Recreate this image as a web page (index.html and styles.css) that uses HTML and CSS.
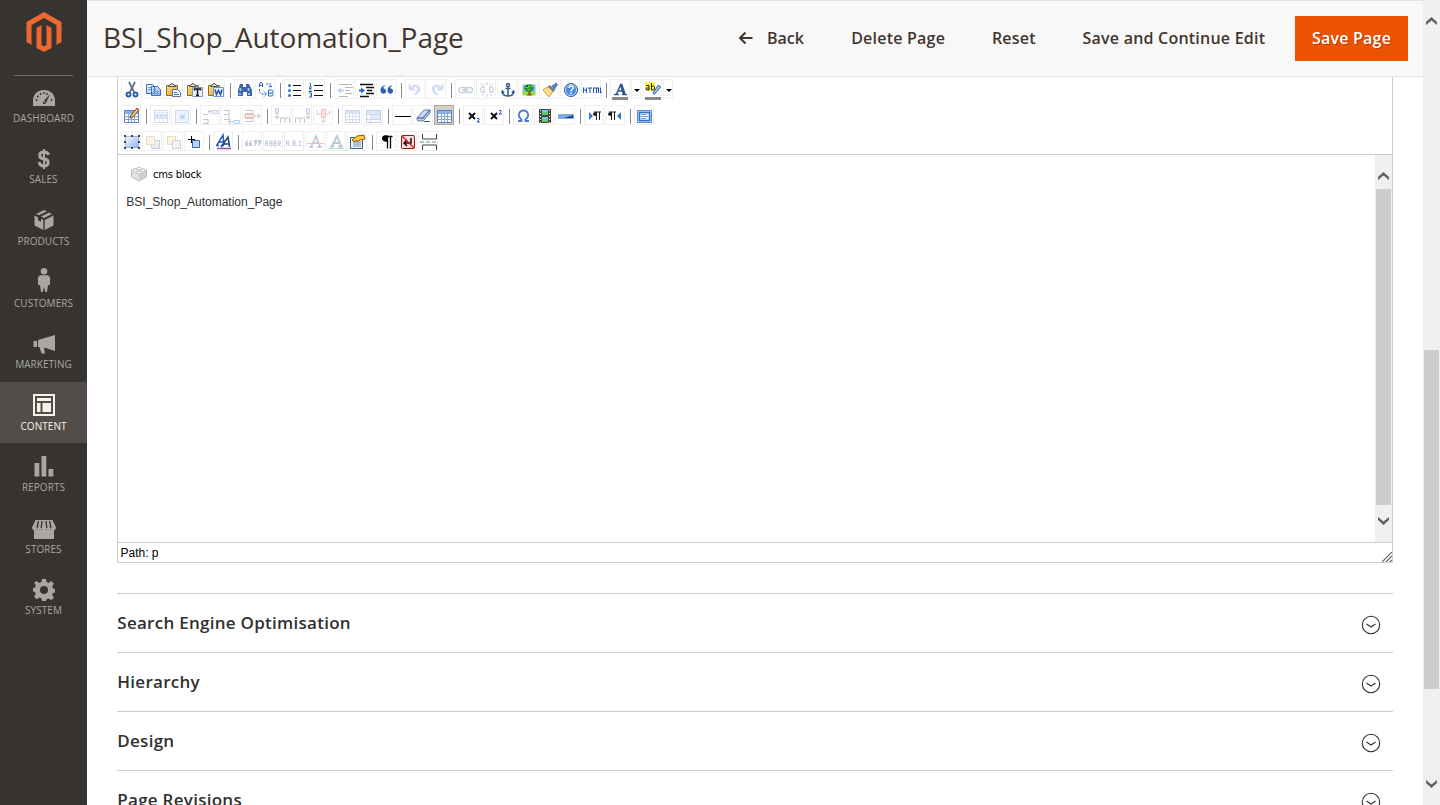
FILE: index.html
```html
<!DOCTYPE html>
<html lang="en">
<head>
<meta charset="utf-8">
<title>BSI_Shop_Automation_Page</title>
<link rel="stylesheet" href="styles.css">
</head>
<body>
<svg class="defs" width="0" height="0">
<defs>
<linearGradient id="blue" x1="0" y1="0" x2="1" y2="1"><stop offset="0" stop-color="#f4f9ff"/><stop offset="1" stop-color="#8fb4ee"/></linearGradient>
<linearGradient id="gold" x1="0" y1="0" x2="1" y2="1"><stop offset="0" stop-color="#ffe48a"/><stop offset="1" stop-color="#d79c20"/></linearGradient>
<g id="board"><path d="M2.500 4.500h11v10h-11z" fill="url(#gold)" stroke="#8a6a24"/><path d="M4.500 5.500h7l-1.500-2h-1c0-1.500-2-1.500-2 0h-1z" fill="#ddd" stroke="#555"/></g>
<g id="grid"><path d="M2.500 4.500h14v12h-14z" fill="#fff" stroke="#5c80bd"/><path d="M3 5h13v3H3z" fill="#8bb1ef"/><path d="M3 10.500h13M3 13.500h13M6.500 7v9M9.500 7v9M12.500 7v9" stroke="#84a4da" fill="none"/></g>
<g id="expand"><circle cx="9" cy="9" r="8.700"/><path d="M4.500 8l4.500 3L13.500 8"/></g>
</defs>
</svg>
<div class="page">
<nav class="menu">
<div class="logo"><svg width="36" height="40" viewBox="0 0 36 40"><path fill="#ee672f" d="M18 0L.5 10v20l5 3V13L18 6l12.500 7v20l5-3V10z"/><path fill="#ee672f" d="M10.500 16l5-3v20l2.500 1.500 2.500-1.500V13l5 3v20L18 40l-7.500-4z"/></svg></div>
<ul class="menu-list">
<li><svg viewBox="0 -1 24 24"><path fill="currentColor" d="M1 20v-5C1 8 5.500 4 12 4s11 4 11 11v5z"/><g fill="#373330"><circle cx="4.500" cy="14" r=".9"/><circle cx="5.800" cy="10.500" r=".9"/><circle cx="8.500" cy="8" r=".9"/><circle cx="12" cy="7" r=".9"/><circle cx="15" cy="8" r=".9"/><circle cx="19.500" cy="14" r=".9"/><path d="M18 8l-4 9c-1 2-4 1-3-1z"/></g><circle cx="12.500" cy="16" r=".8" fill="currentColor"/></svg><span>Dashboard</span></li>
<li><svg viewBox="0 0 24 24"><path fill="none" stroke="currentColor" stroke-width="3" d="M16.500 8c-.5-2-2-3-4.500-3-5.500 0-5.500 5.500-1.500 6.500l3 .7C17.500 13.500 17 19 12 19c-3 0-4.500-1.500-5-4"/><path stroke="currentColor" stroke-width="2" d="M12 2v20"/></svg><span>Sales</span></li>
<li><svg viewBox="0 0 24 24"><path fill="currentColor" d="M12 2l3 1.300-8 4-3-1.400zM17 4.400l3 1.500-8 4-3-1.500zM2.500 7.500l3.500 1.700v3l3 1.500v-3l2.300 1.200V22L2.500 17.500zM21.500 7.500v10L12.700 22V11.900z"/></svg><span>Products</span></li>
<li><svg class="person" viewBox="0 0 24 24"><circle cx="12" cy="3.300" r="3.300" fill="currentColor"/><path fill="currentColor" d="M8 7.200h8l2 2V17h-2l-1 7h-1.800L12 19l-1.200 5H9l-1-7H6V9.200z"/></svg><span>Customers</span></li>
<li><svg viewBox="0 0 24 24"><path fill="currentColor" d="M1.500 10H5v6H1.500zM6 9l17-5v16L12 16.500 13 22.500h-3.500L7.500 16H6z"/></svg><span>Marketing</span></li>
<li class="active"><svg viewBox="0 0 24 24"><path d="M2 2h20v20H2z" fill="none" stroke="currentColor" stroke-width="2"/><path fill="currentColor" d="M5 5h14v3H5zM5 10h3.500v9H5zM10.500 10H19v9h-8.500z"/></svg><span>Content</span></li>
<li><svg viewBox="0 0 24 24"><path fill="currentColor" d="M2.500 9h4.800v13.500H2.500zM9.500 2h4.800v20.500H9.500zM16.500 15h4.800v7.500h-4.800z"/></svg><span>Reports</span></li>
<li><svg viewBox="0 0 24 24"><path fill="currentColor" d="M3.500 4h17L24 11.500c0 3-4 4-5 1.500-1 2-4 2-4.500 0-1 2-4 2-5 0-1 2-4 2-4.500 0-1 2.500-5 1.500-5-1.500z"/><path stroke="#373330" stroke-width="1.300" d="M6.500 5L5 12M10 5l-.8 7M14 5l.8 7M17.500 5l1.500 7"/><path fill="currentColor" d="M2 14h20v9H2z"/></svg><span>Stores</span></li>
<li><svg viewBox="0 0 24 24"><path fill="currentColor" fill-rule="evenodd" d="M10 1h4l.6 3 2 .9L19.300 3 22 5.800l-1.800 2.500.8 2.100 2 .5v3.500l-2 .6-.8 2 1.800 2.500-2.700 2.700-2.600-1.800-2.100.9L14 23h-4l-.6-2.700-2.100-.9-2.600 1.800L2 18.500 3.800 16 3 14l-2-.6V9.900l2-.5.8-2.100L2 4.800 4.700 3l2.600 1.900 2.100-.9zM12 8a4 4 0 100 8 4 4 0 000-8z"/></svg><span>System</span></li>
</ul>
</nav>
<main class="main">
<header class="header">
<h1>BSI_Shop_Automation_Page</h1>
<div class="actions">
<span class="act back"><svg width="15" height="14" viewBox="0 0 15 14"><path d="M7.500 1.500L2 7l5.500 5.500M2 7h12.500" fill="none" stroke="#41362f" stroke-width="2"/></svg>Back</span>
<span class="act delete">Delete Page</span>
<span class="act reset">Reset</span>
<span class="act continue">Save and Continue Edit</span>
<span class="save">Save Page</span>
</div>
</header>
<div class="content">
<section class="editor">
<div class="toolbar">
<div class="row">
<i class="btn"><svg viewBox="0 0 20 20"><path d="M7 2l5 10M13 2L8 12" stroke="#5d6d86" stroke-width="1.700"/><g fill="none" stroke="#285cb5" stroke-width="1.900"><circle cx="6.500" cy="14.500" r="2"/><circle cx="13.500" cy="14.500" r="2"/></g></svg></i>
<i class="btn"><svg viewBox="0 0 20 20"><g fill="url(#blue)" stroke="#3c6ec4"><path d="M3.500 4.500h6l2 2v7h-8zM8.500 6.500h6l3 3v6h-9z"/></g><path d="M5 7.500h3M5 9.500h3M10 9.500h3M10 11.500h6M10 13.500h6" stroke="#6f96da"/></svg></i>
<i class="btn"><svg viewBox="0 0 20 20"><g transform="translate(0 1)"><use href="#board"/><path d="M8.500 8.500h5l3 3v4h-8z" fill="#edf3fc" stroke="#5273a4"/><path d="M10 11.500h3M10 13.500h5" stroke="#5273a4"/></g></svg></i>
<i class="btn"><svg viewBox="0 0 20 20"><g transform="translate(0 1)"><use href="#board"/><path d="M7.500 6.500h10v9h-10z" fill="#e8f0ff" stroke="#8297b7"/><path d="M9.500 9.500V8h6v1.500M12.500 8v6.500M11 14.500h3" fill="none" stroke="#111" stroke-width="1.500"/></g></svg></i>
<i class="btn"><svg viewBox="0 0 20 20"><g transform="translate(0 1)"><use href="#board"/><path d="M7.500 6.500h10v9h-10z" fill="#e8f0ff" stroke="#6f94ce"/><path d="M9 8.500l1.500 5 2-4 2 4 1.500-5" fill="none" stroke="#2155ae" stroke-width="1.500"/></g></svg></i>
<b class="sep"></b>
<i class="btn"><svg viewBox="0 0 20 20"><path d="M5 4h3v3h3V4h3l3 6v6h-5v-4H8v4H3v-6z" fill="#3b67aa"/><path d="M5.500 8v3M13.500 8v3M5 13v2M14 13v2" stroke="#a8c8f4" stroke-width="1.800"/></svg></i>
<i class="btn"><svg viewBox="0 0 20 20"><g fill="none" stroke="#2765c7"><path d="M3.500 7V4L5 2l1.500 2v3M3.500 5.500h3M12.500 10v6h3c2 0 2-3 0-3 2 0 2-3 0-3zM12.500 13h3"/><path d="M3.500 9v3l2 2h5M8 11.500l2.500 2.500L8 16.500" stroke-dasharray="2 1"/><path d="M10 4h4.500v3M12.500 5.500l2 2 2-2" stroke-dasharray="2 1"/></g></svg></i>
<b class="sep"></b>
<i class="btn"><svg viewBox="0 0 20 20"><path d="M8 5.500h8M8 10.500h8M8 15.500h8" stroke="#111"/><g fill="#3974cc"><circle cx="4.500" cy="5.500" r="1.500"/><circle cx="4.500" cy="10.500" r="1.500"/><circle cx="4.500" cy="15.500" r="1.500"/></g></svg></i>
<i class="btn"><svg viewBox="0 0 20 20"><path d="M8 5.500h9M8 10.500h9M8 15.500h9" stroke="#111"/><path d="M3.500 3.500h1v3M3 7h3M3 8.500h2v1l-2 2h3M3 13h2.500v4H3M4 15h1" fill="none" stroke="#245bc5"/></svg></i>
<b class="sep"></b>
<i class="btn dim"><svg viewBox="0 0 20 20"><path d="M4 4.500h13M10 7.500h8M10 10.500h5M10 13.500h7M4 16.500h9" stroke="#222"/><path d="M2 10.500l4-3v2h3v2H6v2z" fill="#3a76d2"/></svg></i>
<i class="btn"><svg viewBox="0 0 20 20"><path d="M4 4.500h13M10 7.500h8M11 10.500h5M10 13.500h8M4 16.500h9" stroke="#111" stroke-width="1.400"/><path d="M9 10.500l-4-3v2H3v2h2v2z" fill="#2765c7"/></svg></i>
<i class="btn"><svg viewBox="0 0 20 20"><g fill="#2b5eb0" transform="translate(.5 .5)"><path d="M8.500 5C6 6 5.500 7 6 8c2 0 2.500 1 2.500 3 0 3-5.500 3-5.500-1 0-3 2-5 5.500-5zM15.500 5C13 6 12.500 7 13 8c2 0 2.500 1 2.500 3 0 3-5.500 3-5.500-1 0-3 2-5 5.500-5z"/></g></svg></i>
<b class="sep"></b>
<i class="btn dim"><svg viewBox="0 0 20 20"><path d="M3 4v6h6L7 8c3-3 6 0 4 3l-3 4c8-2 8-11 0-10L5 7z" fill="#779de2" stroke="#547fc4" stroke-width=".6"/></svg></i>
<i class="btn dim"><svg viewBox="0 0 20 20"><path d="M16 4v6h-6l2-2c-3-3-6 0-4 3l3 4c-8-2-8-11 0-10l3 2z" fill="#779de2" stroke="#547fc4" stroke-width=".6"/></svg></i>
<b class="sep"></b>
<i class="btn dim"><svg viewBox="0 0 20 20"><g fill="none" stroke="#56739c" stroke-width="1.400"><rect x="3" y="7.500" width="7" height="5" rx="2.500"/><rect x="9.500" y="7.500" width="7" height="5" rx="2.500"/><path d="M6 10h7"/></g></svg></i>
<i class="btn dim"><svg viewBox="0 0 20 20"><g fill="none" stroke="#56739c" stroke-width="1.300"><path d="M8 7H5c-2 1-2 4 0 5h3M12 7h3c2 1 2 4 0 5h-3M6 9.500h2M12 9.500h2"/><path d="M10 2v3M6 3l1.500 2M14 3l-1.500 2M3 4l2 1M17 4l-2 1M10 14v3M7 14l-2 2M13 14l2 2" stroke="#555" stroke-width=".8"/></g></svg></i>
<i class="btn"><svg viewBox="0 0 20 20"><g fill="none" stroke="#3b6190" stroke-width="1.600"><circle cx="10" cy="5" r="1.500"/><path d="M10 6.500v10M7.500 8.500h5M4.500 11.500c0 3 2 4.500 5.500 4.500s5.500-1.500 5.500-4.500M3.500 13l1-2 1.500 2M16.500 13l-1-2-1.500 2"/></g></svg></i>
<i class="btn"><svg viewBox="0 0 20 20"><g transform="translate(.5 .5)"><path fill="#80bfff" d="M3 4h13v8H3z"/><path fill="#9cd944" d="M3 11h13v4H3z"/><path d="M9 8h2v5l2 2H7l2-2z" fill="#885521"/><path d="M5 6l2-2h5l2 2v3l-2 2H7L5 9z" fill="#268d2d"/><path d="M6 7h3V5M10 6h3M8 9h3" stroke="#7bd756"/></g></svg></i>
<i class="btn"><svg viewBox="0 0 20 20"><path d="M12 6l4-3 1.500 1.500-3 5z" fill="#5684ce" stroke="#244d86" stroke-width=".6"/><path d="M9 6l5 4-5 7-6-7z" fill="#f8dc80" stroke="#c89640"/><path d="M10 5l5 5-1.500 2L8 7z" fill="#6b7d99"/><path d="M4.500 10l4.500 5" stroke="#fff5b3"/></svg></i>
<i class="btn"><svg viewBox="0 0 20 20"><g transform="translate(.5 .5)"><circle cx="9.500" cy="9.500" r="6.500" fill="#488ade" stroke="#245ba9"/><circle cx="9.500" cy="9.500" r="5.500" fill="none" stroke="#b8d8ff"/><path d="M7.500 7.500c0-3 4.500-2.500 4 0 0 1.500-2 1.500-2 3.500M9.500 12v1.500" stroke="#fff" fill="none" stroke-width="1.500"/></g></svg></i>
<i class="btn"><svg viewBox="0 0 20 20"><path d="M1.500 7.500V13M4.500 7.500V13M1.500 10h3M6 8h4M8 8v5M11.500 13V8h3v5M14.500 8h2v5M18.500 7.500v5H20" stroke="#2456a8" stroke-width="1.100" fill="none"/></svg></i>
<b class="sep"></b>
<i class="btn"><svg viewBox="0 0 20 20"><path d="M3 14.500h5M11 14.500h5M5.500 14l4-9 3 9M7 11h5" fill="none" stroke="#30578e" stroke-width="1.400"/><path d="M10 4l3.500 10" stroke="#30578e" stroke-width="2.500"/><path d="M1 17h16v3H1z" fill="#888"/></svg></i><i class="arrow"></i>
<i class="btn"><svg viewBox="0 0 20 20"><path d="M2 2h10v9H2z" fill="#f9f84a"/><path d="M3 5.500h3V10H4c-1.500-1-1.500-2 0-2h2M8.500 3v7h2c1.500 0 1.500-4 0-4h-2" fill="none" stroke="#222"/><path d="M10 13l1.500 1L17.500 7l-2-2z" fill="#a8cbed" stroke="#29589d"/><path d="M2 17h16v3H2z" fill="#888"/></svg></i><i class="arrow"></i>
</div>
<div class="row">
<i class="btn"><svg viewBox="0 0 20 20"><use href="#grid"/><path d="M8 12l1-3 6-7 2 2-6 7z" fill="#f8c46c" stroke="#6b4525"/><path d="M14.500 3l1-1 2 2-1 1z" fill="#e05b48"/></svg></i>
<b class="sep"></b>
<i class="btn dim"><svg viewBox="0 0 20 20"><path d="M3.500 4.500h13v12h-13z" fill="#fff" stroke="#678dcc"/><path d="M3 8h14v5H3z" fill="#739eea"/><path d="M8.500 5v11M12.500 5v11M4 6.500h12" stroke="#a8c4ee"/></svg></i>
<i class="btn dim"><svg viewBox="0 0 20 20"><path d="M3.500 4.500h13v12h-13z" fill="#d7e6ff" stroke="#678dcc"/><path d="M8 9h5v4H8z" fill="#3470d2"/><path d="M4 8h12M4 13h12M8 5v11M13 5v11" stroke="#a8c4ee"/></svg></i>
<b class="sep"></b>
<i class="btn dim"><svg viewBox="0 0 20 20"><path d="M2 8.500h5M2 13.500h5M2 17.500h5M7 13v5M11 5.500H8M10 3L7 5.500 10 8" fill="none" stroke="#555"/><path d="M11.500 4.500h6v3h-6z" fill="#cfe1ff" stroke="#376ccd"/></svg></i>
<i class="btn dim"><svg viewBox="0 0 20 20"><path d="M2 4.500h5M2 8.500h5M2 13.500h5M7 4v10M11 15.500H7M9 13l-3 2.500L9 18" fill="none" stroke="#555"/><path d="M11.500 14.500h6v3h-6z" fill="#cfe1ff" stroke="#376ccd"/></svg></i>
<i class="btn dim"><svg viewBox="0 0 20 20"><path d="M2 4.500h8v3H2M2 15.500h8v-3H2M11 10h6M14.500 7.500l3 2.500-3 2.500" fill="none" stroke="#555"/><path d="M1.500 8.500h10v3h-10z" fill="#f7a2a2" stroke="#d04e4e"/></svg></i>
<b class="sep"></b>
<i class="btn dim"><svg viewBox="0 0 20 20"><path d="M3.500 2.500h3v5h-3z" fill="#b8d0ff" stroke="#437acb"/><path d="M5 8v4M3 10l2 3 2-3M8.500 17v-5h9v5M13 12v5" fill="none" stroke="#555"/></svg></i>
<i class="btn dim"><svg viewBox="0 0 20 20"><path d="M13.500 2.500h3v5h-3z" fill="#b8d0ff" stroke="#437acb"/><path d="M15 8v4M13 10l2 3 2-3M2.500 17v-5h9v5M7 12v5" fill="none" stroke="#555"/></svg></i>
<i class="btn dim"><svg viewBox="0 0 20 20"><path d="M3 4v4h4M16 4v4h-4M9.500 12v5M7 14l2.500 3 2.500-3" fill="none" stroke="#777"/><path d="M7.500 3.500h4v8h-4z" fill="#f7a2a2" stroke="#d04e4e"/></svg></i>
<b class="sep"></b>
<i class="btn dim"><svg viewBox="0 0 20 20"><use href="#grid"/></svg></i>
<i class="btn dim"><svg viewBox="0 0 20 20"><path d="M2.500 4.500h14v12h-14z" fill="#fff" stroke="#3d63a5"/><path d="M3 5h13v3H3zM7 8h9v6H7z" fill="#9dc0f6"/><path d="M6.500 5v11M12.500 5v3M3 8.500h13M3 13.500h13" stroke="#678dcc"/></svg></i>
<b class="sep"></b>
<i class="btn"><svg viewBox="0 0 20 20"><path d="M2 10.500h16" stroke="#000"/></svg></i>
<i class="btn"><svg viewBox="0 0 20 20"><path d="M3 12l7-8h6v3l-7 8H5c-2 0-2-1-2-3z" fill="url(#blue)" stroke="#62789d"/><path d="M3 12h6l7-8M10 15.500h6" fill="none" stroke="#314f7e"/></svg></i>
<i class="btn selected"><svg viewBox="0 0 20 20"><use href="#grid"/></svg></i>
<b class="sep"></b>
<i class="btn"><svg viewBox="0 0 20 20"><path d="M5 7l6 6M11 7l-6 6" stroke="#111" stroke-width="2"/><path d="M13 12.500h2V14l-2 2h3" fill="none" stroke="#245bc5"/></svg></i>
<i class="btn"><svg viewBox="0 0 20 20"><path d="M6 7l6 6M12 7l-6 6" stroke="#111" stroke-width="2"/><path d="M14 4.500h2V6l-2 2h3" fill="none" stroke="#245bc5"/></svg></i>
<b class="sep"></b>
<i class="btn"><svg viewBox="0 0 20 20"><path d="M4 15h3.500v-1.500c-5-4-2-9 2-9s7 5 2 9V15H15" fill="none" stroke="#4b79ce" stroke-width="1.800"/></svg></i>
<i class="btn"><svg viewBox="0 0 20 20"><path d="M4 3h12v14H4z" fill="#444"/><path d="M7 4h6v5H7zM7 11h6v5H7z" fill="#62c66c"/><path d="M7 4h6v2H7zM7 11h6v2H7z" fill="#70c9ee"/><path d="M5.500 4v13M14.500 4v13" stroke="#fff" stroke-dasharray="1 2"/></svg></i>
<i class="btn"><svg viewBox="0 0 20 20"><path d="M2.500 8.500h15v4h-15z" fill="#7babed" stroke="#8da5cf"/><path d="M8 12h9V9z" fill="#164c9d"/></svg></i>
<b class="sep"></b>
<i class="btn"><svg viewBox="0 0 20 20"><path d="M4 6l4 4-4 4z" fill="#3974cc"/><path d="M11.500 6v8M14.500 6v8M9 6h7" stroke="#222"/><path d="M11 6c-4 0-4 4 0 4z" fill="#222"/></svg></i>
<i class="btn"><svg viewBox="0 0 20 20"><path d="M15 6l-4 4 4 4z" fill="#3974cc"/><path d="M5.500 6v8M8.500 6v8M3 6h7" stroke="#222"/><path d="M5 6c-4 0-4 4 0 4z" fill="#222"/></svg></i>
<b class="sep"></b>
<i class="btn"><svg viewBox="0 0 20 20"><path d="M2.500 4.500h14v12h-14z" fill="#b9d2fa" stroke="#6288c2"/><path d="M4.500 6.500h10v8h-10z" fill="#eef6ff" stroke="#3470c6" stroke-width="1.500"/><path d="M6 8.500h6M6 10.500h7M6 12.500h5" stroke="#7ba3df"/></svg></i>
</div>
<div class="row">
<i class="btn"><svg viewBox="0 0 20 20"><path d="M3.500 4.500h13v11h-13z" fill="url(#blue)" stroke="#777" stroke-dasharray="1 1"/><path d="M2 3h2v2H2zM9 3h2v2H9zM16 3h2v2h-2zM2 15h2v2H2zM9 15h2v2H9zM16 15h2v2h-2zM2 9h2v2H2zM16 9h2v2h-2z" fill="#294978"/></svg></i>
<i class="btn dim"><svg viewBox="0 0 20 20"><path d="M8.500 8.500h8v8h-8z" fill="#b9c9df" stroke="#65779a"/><path d="M3.500 4.500h8v8h-8z" fill="#ffe3a0" stroke="#b89954"/></svg></i>
<i class="btn dim"><svg viewBox="0 0 20 20"><path d="M3.500 4.500h8v8h-8z" fill="#ffe3a0" stroke="#b89954"/><path d="M8.500 8.500h8v8h-8z" fill="#d9e0eb" stroke="#65779a"/></svg></i>
<i class="btn"><svg viewBox="0 0 20 20"><path d="M3 7.500h7M6.500 4v7" stroke="#000"/><path d="M7.500 8.500h7v7h-7z" fill="#b9d5fb" stroke="#3367b4"/></svg></i>
<b class="sep"></b>
<i class="btn"><svg viewBox="0 0 20 20"><path d="M2 13.500h3M7 13.500h3M3 13l6-10 1 10M5 10h5" fill="none" stroke="#285aad" stroke-width="1.500"/><path d="M7 15l7-10 1.500 10M10 12h6" fill="none" stroke="#244786" stroke-width="1.600"/><path d="M3 16.500h14" stroke="#8653af" stroke-width="1.500"/></svg></i>
<b class="sep"></b>
<i class="btn dim"><svg viewBox="0 0 20 20"><g fill="#3c5e96"><path d="M4 8l-2 3v3h3v-3H4l1-3zM8 8l-2 3v3h3v-3H8l1-3zM11 8h3v3l-2 3h-1l1-3h-1zM15 8h3v3l-2 3h-1l1-3h-1z"/></g></svg></i>
<i class="btn dim"><svg viewBox="0 0 20 20"><path d="M1.500 14V9h2v5M2 11.500h2M6 9v5h2V9zM6 11.500h2M10 9v5h2V9zM10 11.500h2M14.500 14V9h2v2.500h-2l2.500 3" fill="none" stroke="#445e9a"/></svg></i>
<i class="btn dim"><svg viewBox="0 0 20 20"><path d="M1.500 14V9h2v5M2 11.500h2M5.500 13v1M8 9v5h2V9zM8 11.500h2M11.500 13v1M16.500 9.500h-2V14h2M18 13v1" fill="none" stroke="#445e9a"/></svg></i>
<i class="btn dim"><svg viewBox="0 0 20 20"><path d="M3 15h4M11 15h5M5 15l5-11 4 11M7 11h5" fill="none" stroke="#30578e" stroke-width="1.600"/><path d="M1 11.500h17" stroke="#e23535"/></svg></i>
<i class="btn dim"><svg viewBox="0 0 20 20"><path d="M3 14.500h4M11 14.500h5M5 14l5-10 4 10M7 11h5" fill="none" stroke="#30578e" stroke-width="1.800"/><path d="M1 16.500h16" stroke="#20ae35"/></svg></i>
<i class="btn"><svg viewBox="0 0 20 20"><path d="M2.500 5.500h12v11h-12z" fill="#eef4fc" stroke="#435574"/><path d="M5 10h8M5 12h8M5 14h8" stroke="#6e8db5"/><path d="M4 8l5-4 7-1 1 4-5 1-3 2-1-2-2 2z" fill="#ffcc3d" stroke="#8c5b17"/></svg></i>
<b class="sep"></b>
<i class="btn"><svg viewBox="0 0 20 20"><path d="M10 4H8.500c-4 0-4 5 1 5zM9 4.500h6.500M10.500 4.500v12M13.500 4.500v12" fill="#000" stroke="#000" stroke-width="1.300"/></svg></i>
<i class="btn"><svg viewBox="0 0 20 20"><rect x="3.500" y="3.500" width="13" height="13" rx="1" fill="#f8dada" stroke="#9c1010"/><path d="M13 6v5H6M9 8l-3 3 3 3" fill="none" stroke="#111" stroke-width="1.500"/><path d="M4 4l12 12" stroke="#e01919" stroke-width="1.300"/></svg></i>
<i class="btn"><svg viewBox="0 0 20 20"><path d="M3.500 2v5h14V2M3.500 18v-5h14v5" fill="none" stroke="#444"/><path d="M1 10h18" stroke="#628d9d" stroke-dasharray="4 2"/></svg></i>
</div>
</div>
<div class="canvas">
<div class="doc">
<div class="widget"><svg width="18" height="16" viewBox="0 0 18 16"><path d="M1.500 4L9 2l7.500 2v7L9 15l-7.500-4z" fill="#e1e1e1" stroke="#bbb"/><path d="M1.500 4.500L9 8l7.500-3.500L9 1z" fill="#f2f2f2"/><path d="M9 8l7-3v6l-7 4z" fill="#cfcfcf"/><g fill="#f8f8f8" stroke="#b5b5b5" stroke-width=".8"><ellipse cx="9" cy="2.500" rx="2.300" ry="1.500"/><ellipse cx="5" cy="4.500" rx="2.300" ry="1.500"/><ellipse cx="13" cy="4.500" rx="2.300" ry="1.500"/><ellipse cx="9" cy="6.500" rx="2.300" ry="1.500"/></g></svg><span>cms block</span></div>
<p>BSI_Shop_Automation_Page</p>
</div>
<div class="scroll inner"><svg viewBox="0 0 11 9"><path d="M0 8V5l5.500-5L11 5v3L5.500 3.500z"/></svg><b></b><svg viewBox="0 0 11 9"><path d="M0 1v3l5.500 5L11 4V1L5.500 5.500z"/></svg></div>
</div>
<div class="status"><span>Path: p</span><svg width="10" height="10" viewBox="0 0 10 10"><path d="M0 10L10 0M4 10l6-6M8 10l2-2" stroke="#666" stroke-width="1.200"/></svg></div>
</section>
<div class="sections">
<section><span>Search Engine Optimisation</span><svg viewBox="0 0 18 18"><use href="#expand"/></svg></section>
<section><span>Hierarchy</span><svg viewBox="0 0 18 18"><use href="#expand"/></svg></section>
<section><span>Design</span><svg viewBox="0 0 18 18"><use href="#expand"/></svg></section>
<section><span>Page Revisions</span><svg viewBox="0 0 18 18"><use href="#expand"/></svg></section>
</div>
</div>
</main>
<div class="scroll outer"><svg viewBox="0 0 11 9"><path d="M0 8V5l5.500-5L11 5v3L5.500 3.500z"/></svg><b></b><svg viewBox="0 0 11 9"><path d="M0 1v3l5.500 5L11 4V1L5.500 5.500z"/></svg></div>
</div>
</body>
</html>
```

FILE: styles.css
```css
* { box-sizing: border-box; }
body { margin: 0; overflow: hidden; background: #fff; color: #303030; font-family: "Open Sans", sans-serif; }
svg { display: block; flex: none; }
.defs { position: absolute; }
.page { display: flex; width: 1440px; height: 805px; overflow: hidden; }

.menu { width: 87px; flex: none; background: #373330; color: #aaa6a0; }
.logo { height: 76px; margin: 0 14px; padding: 12px 0 0 12px; border-bottom: 1px solid #736963; }
.menu-list { list-style: none; margin: -1.8px 0 0; padding: 0; }
.menu-list li { height: 61.55px; padding-top: 11px; display: flex; flex-direction: column; align-items: center; }
.menu-list svg { width: 24px; height: 24px; }
.menu-list .person { margin: -2px 0 2px; }
.menu-list span { font-size: 10px; line-height: 14px; margin-top: 1.7px; letter-spacing: .05px; text-transform: uppercase; }
.menu-list .active { background: #524d49; color: #f7f3eb; }

.main { width: 1336px; flex: none; overflow: hidden; }
.header { height: 77px; padding: 0 15px 0 16px; display: flex; align-items: center; justify-content: space-between; background: #f8f8f8; border-top: 1px solid #e3e3e3; border-bottom: 1px solid #e3e3e3; }
h1 { margin: 0 0 4px; font-size: 28px; font-weight: 400; line-height: 36px; letter-spacing: -.06px; color: #41362f; }
.actions { display: flex; align-items: center; font-size: 16px; font-weight: 600; letter-spacing: .22px; color: #41362f; white-space: nowrap; }
.act { margin: 0 46.8px 2px 0; }
.back { display: flex; align-items: center; gap: 14px; letter-spacing: 0; margin-right: 47.3px; }
.continue { margin-right: 29.8px; }
.save { width: 113px; height: 45px; line-height: 45px; text-align: center; color: #fff; background: #eb5202; text-shadow: 1px 1px 0 rgba(0,0,0,.25); }

.content { padding: 0 30px; }
.editor { border: 1px solid #ccc; border-top: 0; }
.toolbar { height: 78px; padding: 2px 3px 0; display: flex; flex-direction: column; gap: 6px; border-bottom: 1px solid #ccc; }
.row { height: 20px; display: flex; gap: 1px; }
.btn, .arrow { height: 20px; flex: none; border: 1px solid #f0f0ee; }
.btn { width: 20px; }
.btn svg { width: 20px; height: 20px; }
.dim svg { opacity: .33; }
.selected { background: #d4d0c8; border-color: #aaa79f; }
.sep { width: 7px; flex: none; border-left: 4px solid transparent; border-right: 2px solid transparent; background: #8c8690 padding-box; height: 15px; margin-top: 4px; }
.arrow { width: 10px; display: flex; align-items: center; justify-content: center; padding: 3px 0 0 2px; }
.arrow::after { content: ""; border: 3px solid transparent; border-top: 3px solid #000; border-bottom: 0; }
.canvas { height: 387px; display: flex; justify-content: space-between; }
.doc { padding: 11px 8px; font-family: "Liberation Sans", Arial, sans-serif; font-size: 12px; color: #303030; }
.widget { display: flex; align-items: center; height: 16px; padding-left: 4px; gap: 5px; color: #000; font-family: "DejaVu Sans", sans-serif; font-size: 10px; letter-spacing: -.2px; }
.doc p { margin: 12px 0 0 .3px; line-height: 16px; }
.status { height: 20px; padding-left: 2.5px; display: flex; justify-content: space-between; align-items: flex-end; border-top: 1px solid #ccc; font: 12px/18px "Liberation Sans", Arial, sans-serif; color: #000; }

.sections { margin-top: 30px; }
.sections section { height: 59px; padding-right: 13px; display: flex; justify-content: space-between; align-items: center; border-top: 1px solid #ccc; font-size: 17px; font-weight: 600; line-height: 24px; letter-spacing: .27px; }
.sections span { margin: 0 0 1px .3px; }
.sections svg { width: 18px; height: 18px; margin-top: 4px; overflow: visible; fill: none; stroke: #303030; stroke-width: 1.1; }

.scroll { flex: none; background: #f0f0f0; display: flex; flex-direction: column; align-items: center; }
.scroll svg { width: 11px; height: 9px; fill: #606060; }
.scroll b { background: #cdcdcd; width: 15px; }
.inner { width: 17px; padding-top: 17px; }
.inner b { height: 316px; margin: 8px 0 11px; }
.outer { width: 17px; padding-top: 17px; }
.outer b { height: 339px; margin: 324px 0 90px; }
```
